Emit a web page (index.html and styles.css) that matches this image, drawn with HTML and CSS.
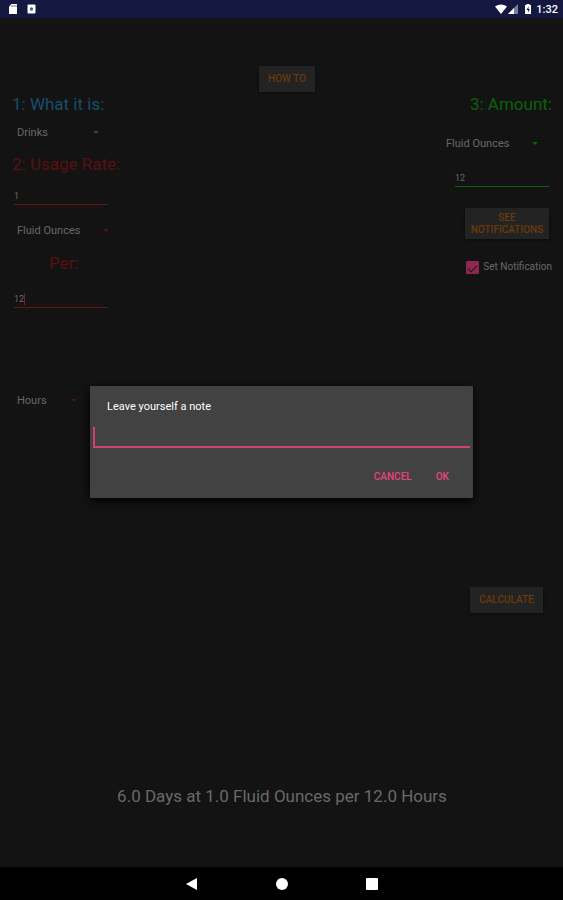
FILE: index.html
```html
<!DOCTYPE html>
<html lang="en">
<head>
    <meta charset="UTF-8">
    <meta name="viewport" content="width=device-width, initial-scale=1.0">
    <title>Usage calculator</title>
    <link rel="stylesheet" href="styles.css">
</head>
<body>
    <!-- Status bar -->
    <header class="status-bar">
        <div class="status-left">
            <svg width="10" height="12" viewBox="0 0 10 12"><path d="M3.500 1H9V11H1V3.500Z" fill="#fff"/><path d="M4 2v2M6 2v2M8 2v2" stroke="#777" stroke-width="1"/></svg>
            <svg width="9" height="12" viewBox="0 0 9 12"><rect x="0.500" y="1.500" width="8" height="9" rx="1" fill="#fff"/><circle cx="4.500" cy="6" r="1.700" fill="#555b78"/></svg>
        </div>
        <div class="status-right">
            <svg width="12" height="12" viewBox="0 0 12 12"><path d="M0 3.500Q6-.5 12 3.500L6 11Z" fill="#fff"/></svg>
            <svg width="10" height="12" viewBox="0 0 10 12"><path d="M10 1V11H0Z" fill="#7b7e9b"/><path d="M6 5V11H0Z" fill="#fff"/></svg>
            <svg class="battery" width="8" height="12" viewBox="0 0 8 12"><path d="M2.500 1h3v1H7v9H1V2h1.500Z" fill="#fff"/><path d="M4.500 3.500L2.500 7H4v2.500L5.800 6H4.500Z" fill="#14173f"/></svg>
            <span>1:32</span>
        </div>
    </header>

    <main class="screen">
        <button class="app-button how-to" type="button">HOW TO</button>

        <div class="columns">
            <section class="usage">
                <h2 class="blue">1: What it is:</h2>
                <div class="spinner blue kind">
                    <select aria-label="What it is"><option>Drinks</option></select>
                </div>
                <h2 class="red">2: Usage Rate:</h2>
                <input class="field red-line" type="text" value="1" aria-label="Usage rate">
                <div class="spinner red unit">
                    <select aria-label="Usage unit"><option>Fluid Ounces</option></select>
                </div>
                <h2 class="red per">Per:</h2>
                <div class="field-row">
                    <input class="field red-line" type="text" value="12" aria-label="Per">
                    <span class="caret"></span>
                </div>
                <div class="spinner red period">
                    <select aria-label="Period"><option>Hours</option></select>
                </div>
            </section>

            <section class="amount">
                <h2 class="green">3: Amount:</h2>
                <div class="spinner green">
                    <select aria-label="Amount unit"><option>Fluid Ounces</option></select>
                </div>
                <input class="field green-line" type="text" value="12" aria-label="Amount">
                <button class="app-button notifications" type="button">SEE NOTIFICATIONS</button>
                <label class="check"><input type="checkbox" checked> Set Notification</label>
                <button class="app-button calculate" type="button">CALCULATE</button>
            </section>
        </div>

        <p class="result">6.0 Days at 1.0 Fluid Ounces per 12.0 Hours</p>

        <!-- Note dialog -->
        <div class="overlay">
            <form class="dialog" role="dialog">
                <label for="note">Leave yourself a note</label>
                <div class="note-row">
                    <input id="note" type="text">
                </div>
                <div class="dialog-buttons">
                    <button type="button">CANCEL</button>
                    <button type="button">OK</button>
                </div>
            </form>
        </div>
    </main>

    <!-- Navigation bar -->
    <nav class="nav-bar">
        <button type="button" aria-label="Back"><svg width="14" height="14" viewBox="0 0 14 14"><path d="M12 1V13L1 7Z" fill="#fff"/></svg></button>
        <button type="button" aria-label="Home"><svg width="14" height="14" viewBox="0 0 14 14"><circle cx="7" cy="7" r="6" fill="#fff"/></svg></button>
        <button type="button" aria-label="Recent apps"><svg width="14" height="14" viewBox="0 0 14 14"><rect x="1" y="1" width="12" height="12" rx="1" fill="#fff"/></svg></button>
    </nav>
</body>
</html>
```

FILE: styles.css
```css
* {
    box-sizing: border-box;
}

body {
    display: flex;
    flex-direction: column;
    min-height: 100vh;
    margin: 0;
    background-color: #131313;
    color: #696969;
    font-family: Roboto, sans-serif;
    font-size: 11px;
}

button, input, select {
    font-family: inherit;
    font-size: inherit;
    color: inherit;
    border: none;
    border-radius: 0;
    background: none;
    margin: 0;
    padding: 0;
    outline: none;
}

svg {
    display: block;
}

/* Status bar */
.status-bar {
    display: flex;
    justify-content: space-between;
    align-items: center;
    height: 18px;
    padding: 0 5px 0 8px;
    background-color: #14173f;
    color: #fff;
    font-weight: 500;
}

.status-left, .status-right {
    display: flex;
    align-items: center;
}

.status-left {
    gap: 9px;
}

.status-right {
    gap: 1px;
}

.battery {
    margin: 0 3px 0 5px;
}

/* Main screen */
.screen {
    position: relative;
    flex: 1;
    display: flex;
    flex-direction: column;
    padding-top: 48px;
}

.app-button {
    min-height: 26px;
    background-color: #232323;
    color: #6b3a0c;
    font-size: 10px;
    font-weight: 500;
    line-height: 12px;
    box-shadow: 0 1px 2px #0c0c0c;
}

.how-to {
    width: 56px;
    margin-left: 11px;
    align-self: center;
}

.columns {
    display: flex;
    justify-content: space-between;
    padding: 0 11px 0 12px;
}

.usage, .amount {
    display: flex;
    flex-direction: column;
}

.amount {
    align-items: flex-end;
}

h2 {
    margin: 0;
    font-size: 17px;
    font-weight: 400;
    line-height: 24px;
}

.blue {
    color: #154e6b;
}

.red {
    color: #5a1013;
}

.green {
    color: #0d600d;
}

/* Drop-downs with a small triangle */
.spinner {
    display: flex;
    align-items: center;
    height: 32px;
    padding-left: 5px;
}

.spinner select {
    appearance: none;
    flex: 1;
    height: 24px;
    color: #696969;
}

.spinner::after {
    content: "";
    border: 3px solid transparent;
    border-top-color: currentColor;
    border-bottom: none;
}

.kind {
    width: 87px;
    margin-bottom: 4px;
}

.unit {
    width: 97px;
    margin: 9px 0 5px;
}

.period {
    width: 65px;
    margin-top: 76px;
}

.field {
    width: 94px;
    height: 17px;
    margin: 12px 0 0 2px;
    border-bottom: 1px solid;
    font-size: 9px;
}

.red-line {
    border-color: #6a1215;
}

.green-line {
    border-color: #0d600d;
}

.per {
    margin-left: 37px;
}

.field-row {
    display: grid;
    margin-top: 4px;
}

.field-row .field, .caret {
    grid-area: 1 / 1;
}

.caret {
    width: 1px;
    height: 12px;
    margin: 14px 0 0 12px;
    background-color: #6b2034;
}

/* Right column */
.amount .spinner {
    width: 92px;
    margin: 11px 14px 0 0;
    padding-left: 0;
}

.amount .field {
    margin: 11px 3px 0 0;
}

.notifications {
    width: 84px;
    min-height: 31px;
    margin: 21px 3px 0 0;
}

.check {
    display: flex;
    align-items: center;
    gap: 4px;
    margin-top: 21px;
    font-size: 10px;
    line-height: 14px;
}

.check input {
    appearance: none;
    display: grid;
    place-items: center;
    width: 13px;
    height: 13px;
    border-radius: 1px;
    background-color: #8c2850;
}

.check input:checked::before {
    content: "";
    width: 8px;
    height: 4px;
    border: solid #1c1216;
    border-width: 0 0 1px 1px;
    transform: rotate(-45deg);
}

.calculate {
    width: 73px;
    margin: 313px 9px 0 0;
}

.result {
    margin: auto 0 60px;
    padding-left: 1px;
    text-align: center;
    font-size: 17px;
    line-height: 22px;
}

/* Dialog */
.overlay {
    position: absolute;
    inset: 0;
    display: flex;
    justify-content: center;
    align-items: center;
    padding-bottom: 2px;
}

.dialog {
    width: 68%;
    padding: 14px 3px 10px;
    border-radius: 1px;
    background-color: #424242;
    color: #fff;
    box-shadow: 0 3px 10px #000;
}

.dialog label {
    display: block;
    margin-left: 14px;
    line-height: 14px;
}

.note-row {
    margin-top: 13px;
    border-bottom: 2px solid #d0416f;
}

.note-row input {
    display: block;
    width: 100%;
    height: 19px;
    padding-left: 4px;
    border-left: 2px solid #d0416f;
}

.dialog-buttons {
    display: flex;
    justify-content: flex-end;
    gap: 24px;
    margin-top: 18px;
    padding-right: 21px;
}

.dialog-buttons button {
    height: 22px;
    color: #e8437c;
    font-size: 10px;
    font-weight: 500;
}

/* Navigation bar */
.nav-bar {
    display: flex;
    justify-content: center;
    align-items: center;
    gap: 76px;
    height: 33px;
    background-color: #000;
}
```
